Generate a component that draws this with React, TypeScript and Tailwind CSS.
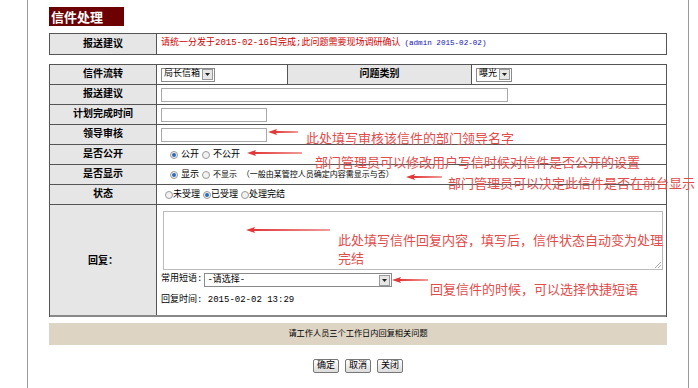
import React from 'react';

const Radio = ({ checked = false }: { checked?: boolean }) => (
  <span className="inline-flex items-center justify-center w-[8px] h-[8px] rounded-full border border-[#9a9a9a] bg-[#f2f2f2] shrink-0">
    {checked && <span className="w-[4px] h-[4px] rounded-full bg-[#2f6bb8]" />}
  </span>
);

const Caret = () => (
  <span className="flex items-center justify-center w-[11px] h-[11px] bg-[#e6e6e6] border border-[#999]">
    <svg width="5" height="3" viewBox="0 0 5 3">
      <path d="M0 0h5L2.5 3z" fill="#222" />
    </svg>
  </span>
);

const Select = ({ label, className }: { label: string; className: string }) => (
  <span className={`flex items-center justify-between h-[14px] border border-[#8a8a8a] bg-white pl-[2px] pr-[1px] ${className}`}>
    <span className="leading-none">{label}</span>
    <Caret />
  </span>
);

const Input = ({ className }: { className: string }) => (
  <span className={`block h-[14px] border border-[#a8a8a8] bg-white ${className}`} />
);

const Label = ({ children, className = '' }: { children: React.ReactNode; className?: string }) => (
  <div className={`flex items-center justify-center bg-[#e6e6e6] border-r border-[#555] font-bold text-[10px] ${className}`}>
    {children}
  </div>
);

const Arrow = ({ x1, x2, y }: { x1: number; x2: number; y: number }) => (
  <polygon
    points={`${x1},${y} ${x1 + 9},${y - 3} ${x1 + 8},${y - 1} ${x2},${y - 0.4} ${x2},${y + 0.4} ${x1 + 8},${y + 1} ${x1 + 9},${y + 3}`}
    fill="#e23a3a"
  />
);

const Btn = ({ children }: { children: React.ReactNode }) => (
  <button className="h-[14px] px-[3px] border border-[#777] rounded-[2px] bg-gradient-to-b from-white to-[#dcdcdc] text-[9px] leading-none">
    {children}
  </button>
);

const note = "absolute text-[13px] leading-[13px] text-[#e24c4c] whitespace-nowrap font-['Noto_Sans_CJK_SC',sans-serif]";

export default function App() {
  return (
    <div className="relative w-[698px] h-[388px] bg-white overflow-hidden text-black font-['Liberation_Mono','Noto_Sans_CJK_SC',monospace] text-[9px]">
      <div className="ml-[27px] w-[662px] h-full border-l border-r border-[#9a9a9a] pl-[21px] pt-[7px]">
        <div className="w-[75px] h-[19px] bg-[#6c0000] text-white font-bold text-[13px] leading-[19px] pl-[2px] font-['Noto_Sans_CJK_SC',sans-serif]">
          信件处理
        </div>

        <div className="mt-[7px] w-[618px] flex border border-[#555] h-[22px]">
          <Label className="w-[107px]">报送建议</Label>
          <div className="flex items-center pl-[4px] text-[9px]">
            <span className="text-[#d00000]">请统一分发于2015-02-16日完成;此问题需要现场调研确认</span>
            <span className="text-[#1010b0] text-[7.6px] ml-[4px]">(admin 2015-02-02)</span>
          </div>
        </div>

        <div className="mt-[9px] w-[618px] border-t border-l border-r border-[#555]">
          <div className="flex h-[20px] border-b border-[#555]">
            <Label className="w-[107px]">信件流转</Label>
            <div className="w-[131px] flex items-center pl-[4px] border-r border-[#555]">
              <Select label="局长信箱" className="w-[54px]" />
            </div>
            <Label className="w-[184px]">问题类别</Label>
            <div className="flex-1 flex items-center pl-[4px]">
              <Select label="曝光" className="w-[36px]" />
            </div>
          </div>
          <div className="flex h-[20px] border-b border-[#555]">
            <Label className="w-[107px]">报送建议</Label>
            <div className="flex-1 flex items-center pl-[4px]">
              <Input className="w-[347px]" />
            </div>
          </div>
          <div className="flex h-[20px] border-b border-[#555]">
            <Label className="w-[107px]">计划完成时间</Label>
            <div className="flex-1 flex items-center pl-[4px]">
              <Input className="w-[106px]" />
            </div>
          </div>
          <div className="flex h-[20px] border-b border-[#555]">
            <Label className="w-[107px]">领导审核</Label>
            <div className="flex-1 flex items-center pl-[4px]">
              <Input className="w-[106px]" />
            </div>
          </div>
          <div className="flex h-[20px] border-b border-[#555]">
            <Label className="w-[107px]">是否公开</Label>
            <div className="flex-1 flex items-center gap-[3px] pl-[13px] leading-[10px]">
              <Radio checked />
              <span>公开</span>
              <Radio />
              <span>不公开</span>
            </div>
          </div>
          <div className="flex h-[20px] border-b border-[#555]">
            <Label className="w-[107px]">是否显示</Label>
            <div className="flex-1 flex items-center gap-[3px] pl-[13px] leading-[10px]">
              <Radio checked />
              <span>显示</span>
              <Radio />
              <span className="text-[8px]">不显示 （一般由某管控人员确定内容需显示与否）</span>
            </div>
          </div>
          <div className="flex h-[20px] border-b border-[#555]">
            <Label className="w-[107px]">状态</Label>
            <div className="flex-1 flex items-center pl-[8px] leading-[10px]">
              <Radio />
              <span className="mr-[3px]">未受理</span>
              <Radio checked />
              <span className="mr-[3px]">已受理</span>
              <Radio />
              <span>处理完结</span>
            </div>
          </div>
          <div className="flex h-[112px] border-b-2 border-[#888]">
            <Label className="w-[107px] pt-[2px]">回复：</Label>
            <div className="flex-1 pl-[6px] pt-[6px]">
              <div className="relative w-[500px] h-[59px] border border-[#bbb] bg-white">
                <svg className="absolute right-[1px] bottom-[1px]" width="7" height="7" viewBox="0 0 7 7">
                  <path d="M1 7L7 1M4 7L7 4" stroke="#aaa" strokeWidth="1" />
                </svg>
              </div>
              <div className="flex items-center mt-[3px] -ml-[2px]">
                <span className="mr-[2px]">常用短语:</span>
                <Select label="-请选择-" className="w-[188px]" />
              </div>
              <div className="mt-[7px] -ml-[2px]">回复时间: 2015-02-02 13:29</div>
            </div>
          </div>
        </div>

        <div className="mt-[6px] w-[618px] h-[22px] bg-[#ddd4c3] flex items-center justify-center text-[8.2px]">
          请工作人员三个工作日内回复相关问题
        </div>

        <div className="mt-[14px] w-[618px] flex justify-center gap-[6px]">
          <Btn>确定</Btn>
          <Btn>取消</Btn>
          <Btn>关闭</Btn>
        </div>
      </div>

      <svg className="absolute inset-0 pointer-events-none" width="698" height="388">
        <Arrow x1={268} x2={298} y={132} />
        <Arrow x1={247} x2={302} y={153} />
        <Arrow x1={406} x2={442} y={177} />
        <Arrow x1={246} x2={330} y={230} />
        <Arrow x1={392} x2={428} y={280} />
      </svg>

      <div className={`${note} left-[306px] top-[131px]`}>此处填写审核该信件的部门领导名字</div>
      <div className={`${note} left-[315px] top-[155px]`}>部门管理员可以修改用户写信时候对信件是否公开的设置</div>
      <div className={`${note} left-[448px] top-[176px]`}>部门管理员可以决定此信件是否在前台显示</div>
      <div className={`${note} left-[338px] top-[231px] leading-[18px]`}>
        此处填写信件回复内容，填写后，信件状态自动变为处理
        <br />
        完结
      </div>
      <div className={`${note} left-[430px] top-[282px]`}>回复信件的时候，可以选择快捷短语</div>
    </div>
  );
}
